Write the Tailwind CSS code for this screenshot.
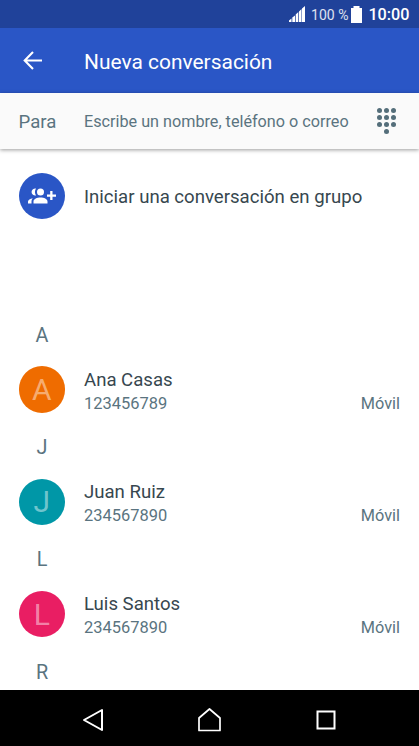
<!DOCTYPE html>
<html lang="es">
<head>
<meta charset="utf-8">
<title>Nueva conversación</title>
<script src="https://cdn.jsdelivr.net/npm/@tailwindcss/browser@4"></script>
</head>
<body class="bg-white font-[Roboto,sans-serif]">
<div class="flex h-[746px] w-[419px] flex-col overflow-hidden bg-white">
  <div class="flex h-7 shrink-0 items-center justify-end bg-[#20429a] pr-[9.500px] text-white">
    <svg class="mr-[6px] h-4 w-4" viewBox="0 0 16 16" fill="#fff"><path d="M0 16v-1.500L2.500 12.500V16zM3.300 16v-4.500L6 9.500V16zM6.700 16V8.500L9.300 6V16zM10 16V5.500L12.500 3V16zM13 16V2.500L16 0V16z"/></svg>
    <span class="pt-[2px] text-[14px] leading-[26px] text-white/85">100 %</span>
    <svg class="ml-[3px] mr-[6px] h-[17px] w-[11px]" viewBox="0 0 11 17" fill="#fff"><path d="M0 2h2.500V0h6v2H11v15H0z"/></svg>
    <span class="pt-[2px] text-[16.200px] font-medium leading-[26px]">10:00</span>
  </div>
  <header class="flex h-[65px] shrink-0 items-center bg-[#2a56c6] pl-[23px] text-white">
    <svg class="mr-[42px] h-[19px] w-[19px]" viewBox="0 0 19 19" fill="none" stroke="#fff" stroke-width="2.100"><path d="M19 9.500H2M10 1L1.700 9.500L10 18"/></svg>
    <h1 class="pt-[4px] text-[20.950px]">Nueva conversación</h1>
  </header>
  <div class="z-10 flex h-14 shrink-0 items-center bg-[#fafafa] pl-[18.500px] text-[#5a7480] shadow-[0_1px_4px_rgba(0,0,0,0.4)]">
    <span class="w-[65.500px] pt-[3px] text-[18.600px]">Para</span>
    <span class="w-[292px] whitespace-nowrap pt-[3px] text-[16.200px]">Escribe un nombre, teléfono o correo</span>
    <svg class="mb-px h-[27px] w-5" viewBox="0 0 20 27" fill="#546e7a"><circle cx="3.500" cy="3.500" r="2.500"/><circle cx="10.500" cy="3.500" r="2.500"/><circle cx="17.500" cy="3.500" r="2.500"/><circle cx="3.500" cy="10.500" r="2.500"/><circle cx="10.500" cy="10.500" r="2.500"/><circle cx="17.500" cy="10.500" r="2.500"/><circle cx="3.500" cy="17.500" r="2.500"/><circle cx="10.500" cy="17.500" r="2.500"/><circle cx="17.500" cy="17.500" r="2.500"/><circle cx="10.500" cy="24.500" r="2.500"/></svg>
  </div>
  <main class="min-h-0 flex-1 overflow-hidden">
    <div class="mb-[69px] flex h-[94px] items-center pl-[18.500px]">
      <div class="mr-[19px] flex size-[46.500px] items-center justify-center rounded-full bg-[#2a56c6]">
        <svg class="mb-px h-4 w-7" viewBox="0 0 28 16" fill="#fff"><circle cx="12.500" cy="4" r="3.500"/><path d="M5.500 15.500v-2C5.500 11 9 9.500 12.500 9.500S19.500 11 19.500 13.500v2zM8 .500A3.600 3.600 0 1 0 8 7.500C6.600 5.500 6.600 2.500 8 .500zM5 10.300C2 10.800 0 12 0 13.500v2h3.500v-2C3.500 12 4 11 5 10.300zM22.200 3h2.300v3.400H28v2.300h-3.500V12h-2.300V8.700H19V6.400h3.200z"/></svg>
      </div>
      <span class="pt-[4px] text-[18.600px] text-[#37474f]">Iniciar una conversación en grupo</span>
    </div>
    <section class="h-[112.300px]">
      <h2 class="flex h-[46px] w-[84px] items-center justify-center pt-[2px] text-[19.800px] text-[#5a7480]">A</h2>
      <div class="flex h-[63px] items-center pl-[18.500px] pr-[19px]">
        <div class="mr-[19px] flex size-[46.500px] items-center justify-center rounded-full bg-[#ef6c00] text-[30px] text-white/45">A</div>
        <div class="flex-1 pt-[4px]"><p class="text-[18.600px] leading-6 text-[#37474f]">Ana Casas</p><p class="text-[16.450px] leading-6 text-[#5a7480]">123456789</p></div>
        <span class="pt-[28px] text-[16.300px] leading-6 text-[#5a7480]">Móvil</span>
      </div>
    </section>
    <section class="h-[112.300px]">
      <h2 class="flex h-[46px] w-[84px] items-center justify-center pt-[2px] text-[19.800px] text-[#5a7480]">J</h2>
      <div class="flex h-[63px] items-center pl-[18.500px] pr-[19px]">
        <div class="mr-[19px] flex size-[46.500px] items-center justify-center rounded-full bg-[#0097a7] text-[30px] text-white/45">J</div>
        <div class="flex-1 pt-[4px]"><p class="text-[18.600px] leading-6 text-[#37474f]">Juan Ruiz</p><p class="text-[16.450px] leading-6 text-[#5a7480]">234567890</p></div>
        <span class="pt-[28px] text-[16.300px] leading-6 text-[#5a7480]">Móvil</span>
      </div>
    </section>
    <section class="h-[112.300px]">
      <h2 class="flex h-[46px] w-[84px] items-center justify-center pt-px text-[19.800px] text-[#5a7480]">L</h2>
      <div class="flex h-[63px] items-center pl-[18.500px] pr-[19px]">
        <div class="mr-[19px] flex size-[46.500px] items-center justify-center rounded-full bg-[#e91e63] text-[30px] text-white/45">L</div>
        <div class="flex-1 pt-[4px]"><p class="text-[18.600px] leading-6 text-[#37474f]">Luis Santos</p><p class="text-[16.450px] leading-6 text-[#5a7480]">234567890</p></div>
        <span class="pt-[28px] text-[16.300px] leading-6 text-[#5a7480]">Móvil</span>
      </div>
    </section>
    <section>
      <h2 class="flex h-[46px] w-[84px] items-center justify-center pt-[2px] text-[19.800px] text-[#5a7480]">R</h2>
    </section>
  </main>
  <nav class="flex h-14 shrink-0 items-center justify-between bg-black pl-[82px] pr-[83px] pt-1">
    <svg class="h-6 w-[22px]" viewBox="0 0 22 24" fill="none" stroke="#fff" stroke-width="2" stroke-linejoin="round"><path d="M20 2v20L2 12z"/></svg>
    <svg class="h-6 w-6" viewBox="0 0 24 24" fill="none" stroke="#fff" stroke-width="1.700" stroke-linejoin="round"><path d="M1 22.500V10L11.500 1l10.500 9v12.500z"/></svg>
    <svg class="h-5 w-5" viewBox="0 0 20 20" fill="none" stroke="#fff" stroke-width="2"><path d="M1.500 1.500h17v17h-17z"/></svg>
  </nav>
</div>
</body>
</html>
